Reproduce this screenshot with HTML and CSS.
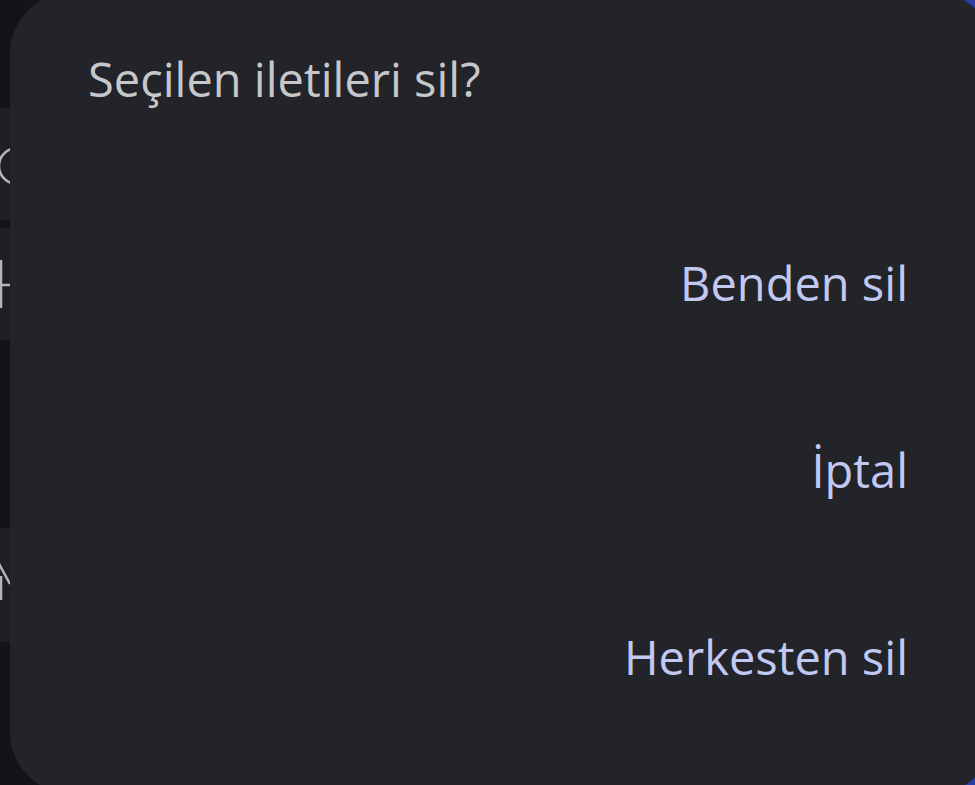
FILE: index.html
```html
<!DOCTYPE html>
<html lang="tr">
<head>
    <meta charset="UTF-8">
    <meta name="viewport" content="width=device-width, initial-scale=1.0">
    <title>İletileri sil</title>
    <link rel="stylesheet" href="styles.css">
</head>
<body>
    <div class="screen">
        <!-- arka plandaki liste (diyalog altında kalan kısım) -->
        <div class="backdrop">
            <div class="bg-gap bg-top"></div>
            <div class="bg-row">
                <svg class="bg-icon" width="30" height="112" viewBox="0 0 30 112">
                    <circle cx="17" cy="58" r="18" fill="none" stroke="#b4b5b9" stroke-width="2.5"/>
                </svg>
            </div>
            <div class="bg-gap bg-line"></div>
            <div class="bg-row">
                <svg class="bg-icon" width="30" height="112" viewBox="0 0 30 112">
                    <path d="M1 32 V80 M-22 57 H13" stroke="#b4b5b9" stroke-width="2.5" fill="none"/>
                </svg>
            </div>
            <div class="bg-gap bg-mid"></div>
            <div class="bg-row bg-row-tall">
                <svg class="bg-icon" width="30" height="114" viewBox="0 0 30 114">
                    <path d="M-3 32 L10 56 M1 48 V72" stroke="#b4b5b9" stroke-width="2.5" fill="none"/>
                </svg>
            </div>
            <div class="bg-gap bg-bottom"></div>
        </div>
        <div class="backdrop-right"></div>

        <div class="dialog">
            <h2 class="dialog-title">Seçilen iletileri sil?</h2>
            <div class="dialog-actions">
                <button class="action-btn">Benden sil</button>
                <button class="action-btn">İptal</button>
                <button class="action-btn">Herkesten sil</button>
            </div>
        </div>
    </div>
</body>
</html>
```

FILE: styles.css
```css
* {
    margin: 0;
    padding: 0;
    box-sizing: border-box;
}

body {
    background: #131417;
    font-family: "Open Sans", "Noto Sans", sans-serif;
    overflow: hidden;
}

.screen {
    position: relative;
    width: 975px;
    height: 785px;
    overflow: hidden;
    background: #131417;
}

.backdrop {
    display: flex;
    flex-direction: column;
    width: 40px;
    height: 785px;
}

.bg-gap {
    background: #131417;
}

.bg-top {
    height: 108px;
}

.bg-line {
    height: 8px;
}

.bg-mid {
    height: 188px;
}

.bg-bottom {
    flex: 1;
}

.bg-row {
    height: 112px;
    background: #1f2024;
    overflow: hidden;
}

.bg-row-tall {
    height: 114px;
}

.bg-icon {
    display: block;
}

.backdrop-right {
    position: absolute;
    top: 0;
    right: 0;
    width: 60px;
    height: 785px;
    background: #2b3ea6;
}

.dialog {
    position: absolute;
    top: -8px;
    left: 10px;
    width: 985px;
    height: 802px;
    background: #232429;
    border-radius: 62px;
    padding: 59px 87px 0 78px;
}

.dialog-title {
    font-size: 47px;
    font-weight: 400;
    line-height: 56px;
    color: #c6c7cb;
}

.dialog-actions {
    display: flex;
    flex-direction: column;
    align-items: flex-end;
    margin-top: 82px;
}

.action-btn {
    height: 187px;
    display: flex;
    align-items: center;
    background: none;
    border: none;
    font-family: inherit;
    font-size: 47px;
    font-weight: 500;
    line-height: 56px;
    color: #c1c8f1;
    cursor: pointer;
}
```
